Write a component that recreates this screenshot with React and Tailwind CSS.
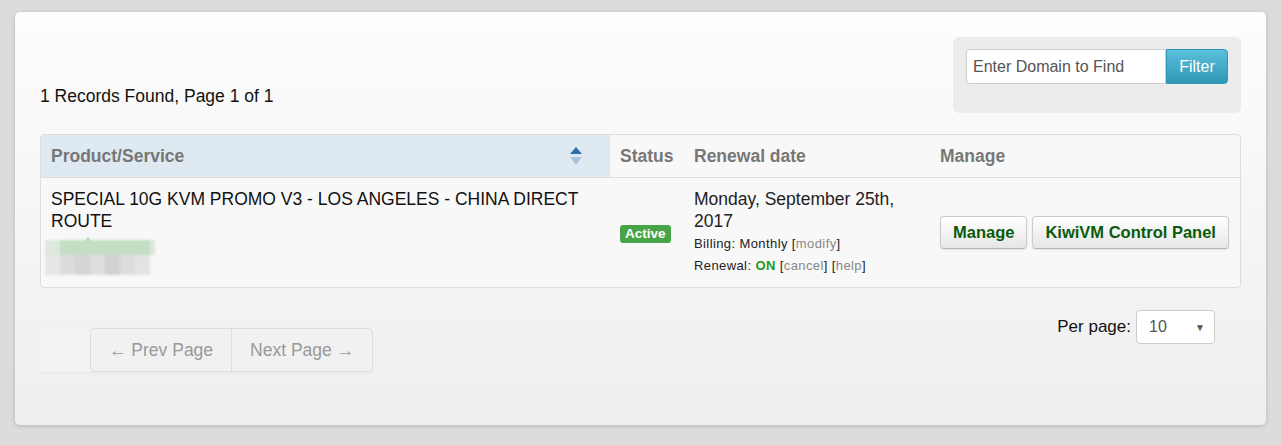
import React from 'react';

const SortIcon = () => (
  <svg width="12" height="19" viewBox="0 0 12 19" className="block">
    <path d="M6 0 L12 7 L0 7 Z" fill="#2d6db3" />
    <path d="M0 10 L12 10 L6 18 Z" fill="#a9c3dd" />
  </svg>
);

const Blurred = () => (
  <div className="w-[110px] pb-[2px] blur-[1px]">
    <div className="flex h-[8px] items-end pl-[42px]">
      <div className="h-[2px] w-[2px] bg-[#6aa86a]" />
    </div>
    <div className="flex h-[15px]">
      <div className="w-[15px] bg-[#dde9dd]" />
      <div className="w-[90px] bg-[#c3dec3]" />
      <div className="w-[5px] bg-[#dbe9db]" />
    </div>
    <div className="flex h-[20px]">
      <div className="w-[15px] bg-[#e6e6e6]" />
      <div className="w-[15px] bg-[#dcdcdc]" />
      <div className="w-[15px] bg-[#d6d6d6]" />
      <div className="w-[15px] bg-[#dedede]" />
      <div className="w-[15px] bg-[#d2d2d2]" />
      <div className="w-[15px] bg-[#dddddd]" />
      <div className="w-[15px] bg-[#e3e3e3]" />
    </div>
  </div>
);

const GreyButton = ({ children }) => (
  <button
    type="button"
    className="shrink-0 whitespace-nowrap rounded-[4px] border border-[#cccccc] border-b-[#b5b5b5] bg-linear-to-b from-white to-[#e6e6e6] px-[12px] py-[5px] text-[16.5px] font-bold leading-[21px] text-[#0b5a0b] shadow-[0_1px_2px_rgba(0,0,0,0.08)]"
  >
    {children}
  </button>
);

export default function App() {
  return (
    <div className="min-h-screen bg-[#dcdcdc] px-[15px] pt-[12px] font-['Liberation_Sans',Arial,sans-serif]">
      <div className="h-[413px] rounded-[5px] bg-linear-to-b from-[#fdfdfd] to-[#eeeeee] px-[25px] pt-[25px] shadow-[0_1px_4px_rgba(0,0,0,0.18)]">
        {/* top bar */}
        <div className="flex items-end justify-between">
          <div className="mb-[7px] text-[17.5px] leading-[20px] text-[#111]">1 Records Found, Page 1 of 1</div>
          <div className="h-[76px] w-[288px] rounded-[6px] bg-[#ececec] pl-[13px] pt-[12px]">
            <div className="flex">
              <input
                type="text"
                placeholder="Enter Domain to Find"
                className="h-[35px] w-[200px] rounded-l-[4px] border border-[#cccccc] bg-white px-[6px] text-[16px] text-[#555] placeholder:text-[#555] focus:outline-none"
              />
              <button
                type="button"
                className="h-[35px] w-[62px] rounded-r-[4px] border border-[#2f96b4] bg-linear-to-b from-[#5bc0de] to-[#2f96b4] text-[16px] text-white"
              >
                Filter
              </button>
            </div>
          </div>
        </div>

        {/* table */}
        <div className="mt-[21px] overflow-hidden rounded-[4px] border border-[#dddddd] bg-[#f8f8f8]">
          <table className="w-full table-fixed border-collapse text-left">
            <colgroup>
              <col className="w-[569px]" />
              <col className="w-[74px]" />
              <col className="w-[246px]" />
              <col />
            </colgroup>
            <thead>
              <tr className="border-b border-[#dddddd] text-[17.5px] font-bold leading-[22px] text-[#777]">
                <th className="bg-[#dfe9f2] px-[10px] py-[10px]">
                  <div className="flex items-center justify-between">
                    <span>Product/Service</span>
                    <span className="mr-[18px]">
                      <SortIcon />
                    </span>
                  </div>
                </th>
                <th className="px-[10px] py-[10px]">Status</th>
                <th className="px-[10px] py-[10px]">Renewal date</th>
                <th className="px-[10px] py-[10px]">Manage</th>
              </tr>
            </thead>
            <tbody>
              <tr>
                <td className="px-[10px] py-[10px] align-middle text-[17.5px] leading-[22px] text-[#111]">
                  <div className="pr-[8px]">SPECIAL 10G KVM PROMO V3 - LOS ANGELES - CHINA DIRECT ROUTE</div>
                  <div className="-ml-[6px]">
                    <Blurred />
                  </div>
                </td>
                <td className="px-[10px] py-[10px] align-middle">
                  <span className="inline-block rounded-[3px] bg-[#47a447] px-[5px] text-[13.5px] font-bold leading-[18px] text-white">
                    Active
                  </span>
                </td>
                <td className="px-[10px] py-[10px] align-middle text-[#222]">
                  <div className="text-[17.5px] leading-[22px]">Monday, September 25th, 2017</div>
                  <div className="text-[13px] leading-[23px] tracking-[0.4px]">
                    Billing: Monthly [<span className="text-[#888]">modify</span>]
                  </div>
                  <div className="text-[13px] leading-[22px] tracking-[0.4px]">
                    Renewal: <span className="font-bold text-[#1e9a1e]">ON</span> [<span className="text-[#888]">cancel</span>] [
                    <span className="text-[#888]">help</span>]
                  </div>
                </td>
                <td className="px-[10px] py-[10px] align-middle">
                  <div className="flex gap-[5px]">
                    <GreyButton>Manage</GreyButton>
                    <GreyButton>KiwiVM Control Panel</GreyButton>
                  </div>
                </td>
              </tr>
            </tbody>
          </table>
        </div>

        {/* bottom bar */}
        <div className="flex items-start justify-between">
          <div className="mt-[40px] flex rounded-[4px] bg-[#f3f3f3] pl-[50px] shadow-[0_1px_2px_rgba(0,0,0,0.04)]">
            <div className="flex rounded-[4px] border border-[#dddddd] bg-[#f1f1f1] text-[17.5px] leading-[20px] text-[#999]">
              <span className="border-r border-[#dddddd] px-[18px] py-[11px]">← Prev Page</span>
              <span className="px-[18px] py-[11px]">Next Page →</span>
            </div>
          </div>
          <div className="mr-[26px] mt-[22px] flex items-center gap-[5px]">
            <span className="text-[17px] text-[#111]">Per page:</span>
            <div className="flex h-[34px] w-[79px] items-center justify-between rounded-[4px] border border-[#cccccc] bg-white pl-[12px] pr-[9px]">
              <span className="text-[16px] text-[#555]">10</span>
              <span className="text-[10px] text-[#555]">▼</span>
            </div>
          </div>
        </div>
      </div>
    </div>
  );
}
